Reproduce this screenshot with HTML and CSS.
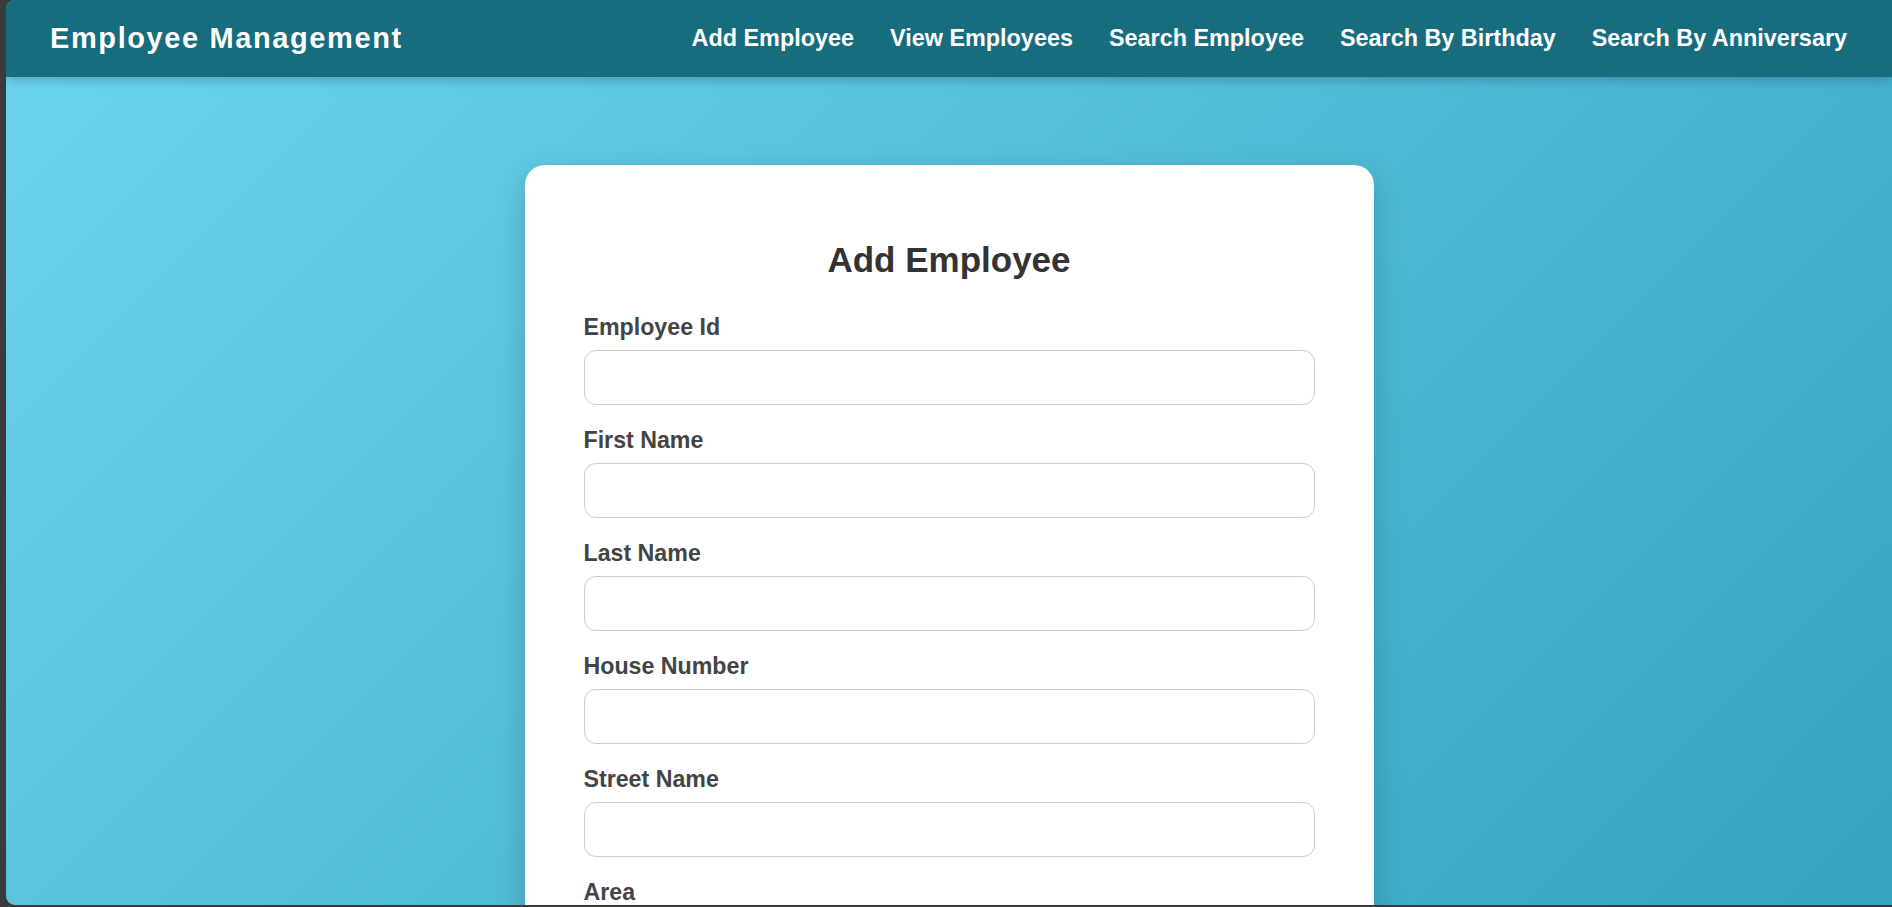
FILE: index.html
```html
<!DOCTYPE html>
<html lang="en">
<head>
<meta charset="utf-8">
<title>Employee Management</title>
<link rel="stylesheet" href="styles.css">
</head>
<body>
<div class="window">
  <header class="navbar">
    <div class="brand">Employee Management</div>
    <nav class="nav-links">
      <a href="#">Add Employee</a>
      <a href="#">View Employees</a>
      <a href="#">Search Employee</a>
      <a href="#">Search By Birthday</a>
      <a href="#">Search By Anniversary</a>
    </nav>
  </header>
  <main class="content">
    <form class="card">
      <h2 class="card-title">Add Employee</h2>
      <div class="field"><label>Employee Id</label><input type="text"></div>
      <div class="field"><label>First Name</label><input type="text"></div>
      <div class="field"><label>Last Name</label><input type="text"></div>
      <div class="field"><label>House Number</label><input type="text"></div>
      <div class="field"><label>Street Name</label><input type="text"></div>
      <div class="field"><label>Area</label><input type="text"></div>
      <div class="field"><label>City</label><input type="text"></div>
      <div class="field"><label>Pincode</label><input type="text"></div>
    </form>
  </main>
</div>
</body>
</html>
```
FILE: styles.css
```css
* { box-sizing: border-box; }
html, body { margin: 0; padding: 0; height: 100%; }
body {
  background: #3b3b3b;
  font-family: "Liberation Sans", Arial, sans-serif;
  overflow: hidden;
}
.window {
  margin-left: 6px;
  height: calc(100vh - 2px);
  border-radius: 9px 0 0 9px;
  overflow: hidden;
  background: linear-gradient(135deg, #6dd5ed 0%, #35a3c1 100%);
  background-attachment: fixed;
  display: flex;
  flex-direction: column;
}
.navbar {
  flex: 0 0 77px;
  height: 77px;
  background: #176c7e;
  display: flex;
  align-items: center;
  justify-content: space-between;
  padding: 0 45px 0 44px;
  box-shadow: 0 3px 10px rgba(0, 0, 0, 0.22);
  position: relative;
  z-index: 1;
}
.brand {
  color: #ffffff;
  font-size: 29px;
  font-weight: bold;
  letter-spacing: 1.6px;
}
.nav-links {
  display: flex;
  gap: 36px;
}
.nav-links a {
  color: #ffffff;
  text-decoration: none;
  font-size: 23.4px;
  font-weight: bold;
}
.content {
  flex: 1;
  display: flex;
  justify-content: center;
  padding-top: 88px;
}
.card {
  width: 849px;
  align-self: flex-start;
  background: #ffffff;
  border-radius: 20px;
  padding: 75px 59px 40px;
  box-shadow: 0 10px 30px rgba(0, 0, 0, 0.18);
  display: flex;
  flex-direction: column;
}
.card-title {
  margin: 0 0 34px;
  text-align: center;
  font-size: 35px;
  line-height: 40px;
  font-weight: bold;
  color: #333333;
}
.field {
  display: flex;
  flex-direction: column;
  margin-bottom: 22px;
}
.field label {
  font-size: 23.2px;
  line-height: 26px;
  font-weight: bold;
  color: #444444;
  margin-bottom: 10px;
}
.field input {
  height: 55px;
  width: 100%;
  border: 1px solid #cccccc;
  border-radius: 12px;
  background: #ffffff;
  font-size: 20px;
  padding: 0 14px;
  outline: none;
}
```
